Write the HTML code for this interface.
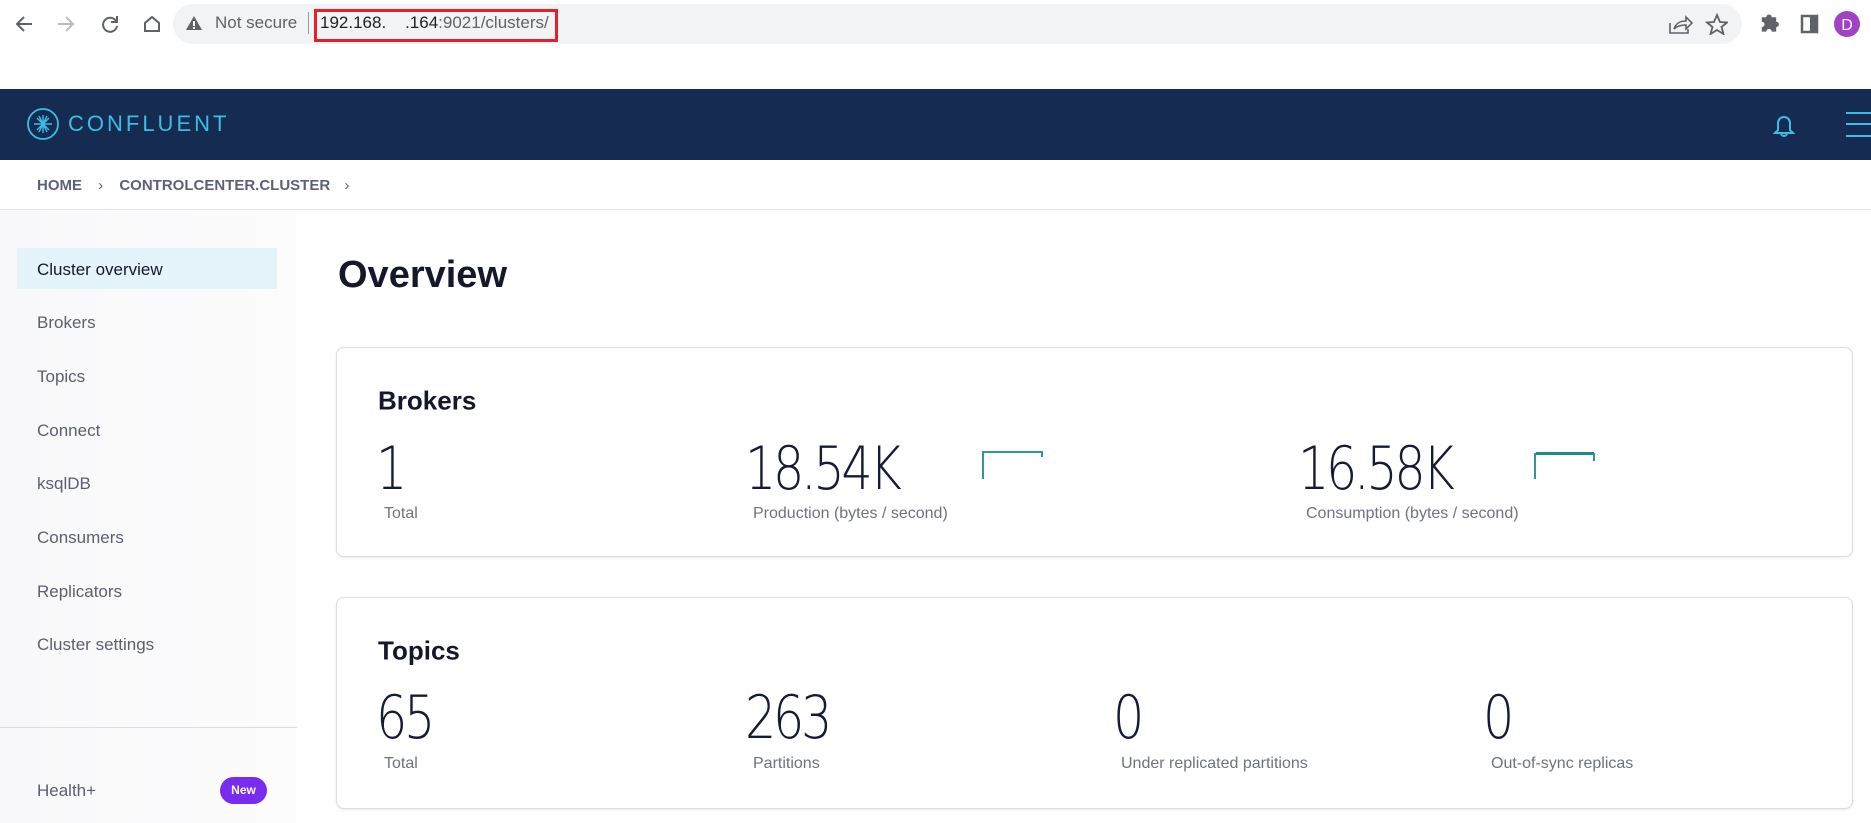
<!DOCTYPE html>
<html><head><meta charset="utf-8"><style>
*{margin:0;padding:0;box-sizing:border-box}
body{width:1871px;height:823px;overflow:hidden;background:#fff;font-family:"Liberation Sans",sans-serif;position:relative;color:#1a1a2e}
.abs{position:absolute}
.side a{position:absolute;left:37px;font-size:17px;color:#5b5f6e;transform:translateY(-50%)}
.num{position:absolute;font-family:"DejaVu Sans","Liberation Sans",sans-serif;font-size:60px;font-weight:200;color:#161a36;letter-spacing:-4px;line-height:1;transform:translateY(-50%) scaleX(.82);transform-origin:left center}
.lab{position:absolute;font-size:16px;color:#6f7280;transform:translateY(-50%)}
.card{position:absolute;left:336px;width:1517px;border:1px solid #dcdde2;border-radius:8px;box-shadow:0 1px 3px rgba(0,0,0,.08);background:#fff}
.h2{position:absolute;left:378px;font-size:26px;font-weight:bold;color:#15172b;transform:translateY(-50%)}
</style></head><body>
<div class="abs" style="left:0;top:0;width:1871px;height:89px;background:#fff"></div>
<svg class="abs" style="left:12px;top:10px" width="150" height="28" viewBox="0 0 150 28">
<path d="M20 14H6M12 7l-7 7 7 7" stroke="#5f6368" stroke-width="2" fill="none"/>
<path d="M46 14h14M54 7l7 7-7 7" stroke="#bbb" stroke-width="2" fill="none"/>
<path d="M104 11a7 7 0 1 0 1 5M105 6v6h-6" stroke="#5f6368" stroke-width="2" fill="none"/>
<path d="M133 21v-8l7-6 7 6v8z" stroke="#5f6368" stroke-width="2" fill="none"/>
</svg>
<div class="abs" style="left:173px;top:4px;width:1569px;height:40px;border-radius:20px;background:#f1f3f4"></div>
<svg class="abs" style="left:186px;top:16px" width="16" height="14"><path d="M8 0L16 14H0z" fill="#5f6368"/><rect x="7" y="5" width="2" height="5" fill="#fff"/><rect x="7" y="11" width="2" height="2" fill="#fff"/></svg>
<div class="abs" style="left:215px;top:13px;font-size:17px;color:#5f6368">Not secure</div>
<div class="abs" style="left:308px;top:12px;width:1px;height:22px;background:#999"></div>
<div class="abs" style="left:314px;top:9px;width:244px;height:33px;border:3px solid #e3202b"></div>
<div class="abs" style="left:320px;top:13px;font-size:17px;color:#202124">192.168.&nbsp;&nbsp;&nbsp;&nbsp;.164<span style="color:#5f6368">:9021/clusters/</span></div>
<svg class="abs" style="left:1668px;top:13px" width="60" height="22"><path d="M2 10v10h18v-4M6 16c2-6 6-8 12-8V4l6 6-6 6v-4c-5 0-9 1-12 4" stroke="#5f6368" stroke-width="1.6" fill="none"/><path d="M49 2l3 7 7 .5-5.5 4.5 2 7-6.5-4-6.5 4 2-7L39 9.5l7-.5z" stroke="#5f6368" stroke-width="1.8" fill="none"/></svg>
<svg class="abs" style="left:1760px;top:8px" width="111" height="32"><path d="M2 8h5a3 3 0 0 1 6 0h5v5a3 3 0 0 1 0 6v5H13a3 3 0 0 0-6 0H2v-5a3 3 0 0 0 0-6z" fill="#5f6368" transform="translate(0,2) scale(.9)"/><rect x="42" y="8" width="15" height="16" fill="none" stroke="#5f6368" stroke-width="2.5"/><rect x="50" y="8" width="7" height="16" fill="#5f6368"/><circle cx="87" cy="16" r="13" fill="#a142c4"/><text x="87" y="22" font-size="16" fill="#fff" text-anchor="middle" font-family="Liberation Sans">D</text></svg>
<div class="abs" style="left:0;top:89px;width:1871px;height:71px;background:#152b51"></div>
<svg class="abs" style="left:26px;top:107px" width="34" height="34" viewBox="0 0 34 34"><circle cx="17" cy="17" r="15" stroke="#3cbde3" stroke-width="1.8" fill="none"/><g stroke="#3cbde3" stroke-width="1.4"><path d="M17 8v18M8 17h18M11 11l12 12M23 11L11 23M13 9l8 16M21 9l-8 16"/></g></svg>
<div class="abs" style="left:68px;top:111px;font-size:22px;letter-spacing:3px;color:#3cbde3">CONFLUENT</div>
<svg class="abs" style="left:1770px;top:112px" width="28" height="28"><path d="M5 21h18l-3-3v-7a6 6 0 0 0-12 0v7zM11 21a3 3 0 0 0 6 0" stroke="#3cbde3" stroke-width="2" fill="none"/></svg>
<div class="abs" style="left:1846px;top:112px;width:25px;height:2px;background:#3cbde3;box-shadow:0 11px 0 #3cbde3,0 23px 0 #3cbde3"></div>
<div class="abs" style="left:37px;top:177px;font-size:15px;font-weight:bold;color:#5d6178">HOME <span style="margin:0 12px;font-weight:normal">›</span> CONTROLCENTER.CLUSTER <span style="margin-left:10px;font-weight:normal">›</span></div>
<div class="abs" style="left:0;top:209px;width:1871px;height:1px;background:#e3e4e8"></div>
<div class="abs" style="left:0;top:210px;width:297px;height:613px;background:linear-gradient(90deg,#f8f8fa,#fcfcfd)"></div>
<div class="abs" style="left:17px;top:248px;width:260px;height:41px;background:#e5f3fb"></div>
<div class="side">
<a style="top:270px;color:#15172b">Cluster overview</a>
<a style="top:323px">Brokers</a>
<a style="top:377px">Topics</a>
<a style="top:431px">Connect</a>
<a style="top:484px">ksqlDB</a>
<a style="top:538px">Consumers</a>
<a style="top:592px">Replicators</a>
<a style="top:645px">Cluster settings</a>
<a style="top:791px">Health+</a>
</div>
<div class="abs" style="left:0;top:727px;width:297px;height:1px;background:#dcdde2"></div>
<div class="abs" style="left:220px;top:777px;width:47px;height:27px;border-radius:14px;background:#7a2bf0;color:#fff;font-size:12px;font-weight:bold;text-align:center;line-height:27px">New</div>
<div class="abs" style="left:338px;top:254px;font-size:38px;font-weight:bold;color:#15172b">Overview</div>
<div class="card" style="top:347px;height:210px"></div>
<div class="card" style="top:597px;height:212px"></div>
<div class="h2" style="top:401px">Brokers</div>
<div class="num" style="left:376px;top:469px">1</div>
<div class="num" style="left:745px;top:469px">18.54K</div>
<div class="num" style="left:1298px;top:469px">16.58K</div>
<div class="lab" style="left:384px;top:514px">Total</div>
<div class="lab" style="left:753px;top:514px">Production (bytes / second)</div>
<div class="lab" style="left:1306px;top:514px">Consumption (bytes / second)</div>
<svg class="abs" style="left:982px;top:450px" width="62" height="30"><path d="M1 29V2h59v5" stroke="#1a8a8a" stroke-width="1.8" fill="none"/></svg>
<svg class="abs" style="left:1534px;top:450px" width="62" height="30"><path d="M1 29V4h59v7" stroke="#1a8a8a" stroke-width="1.8" fill="none"/><rect x="2" y="2" width="58" height="3" fill="#1a8a8a"/></svg>
<div class="h2" style="top:651px">Topics</div>
<div class="num" style="left:376px;top:718px">65</div>
<div class="num" style="left:745px;top:718px">263</div>
<div class="num" style="left:1113px;top:718px">0</div>
<div class="num" style="left:1483px;top:718px">0</div>
<div class="lab" style="left:384px;top:764px">Total</div>
<div class="lab" style="left:753px;top:764px">Partitions</div>
<div class="lab" style="left:1121px;top:764px">Under replicated partitions</div>
<div class="lab" style="left:1491px;top:764px">Out-of-sync replicas</div>
</body></html>
